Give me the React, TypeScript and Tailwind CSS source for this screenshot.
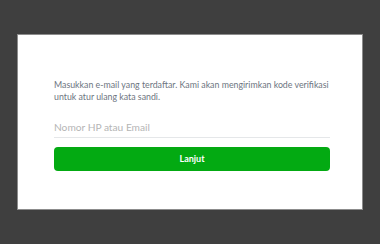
export default function App() {
    return (
        <div className="w-[380px] h-[244px] bg-[#3f3f3f] pt-[34px] px-[17px]" style={{ fontFamily: "Lato, 'Open Sans', sans-serif" }}>
            <div className="h-[176px] bg-white border border-[#8c8c8c] pt-[44px] pl-[36px] pr-[32px]">
                <p className="text-[8.8px] leading-[12px] text-[#6d7581]">
                    Masukkan e-mail yang terdaftar. Kami akan mengirimkan kode verifikasi untuk atur ulang kata sandi.
                </p>
                <div className="mt-[16px] border-b border-[#e5e7e9] pb-[2px]">
                    <input
                        type="text"
                        placeholder="Nomor HP atau Email"
                        className="block w-full h-[16px] text-[10.2px] text-[#333] placeholder:text-[#b5b5b5] outline-0"
                    />
                </div>
                <button className="block mt-[9px] w-full h-[24px] rounded-[4px] bg-[#03aa12] text-white text-[9px] font-bold">
                    Lanjut
                </button>
            </div>
        </div>
    )
}
